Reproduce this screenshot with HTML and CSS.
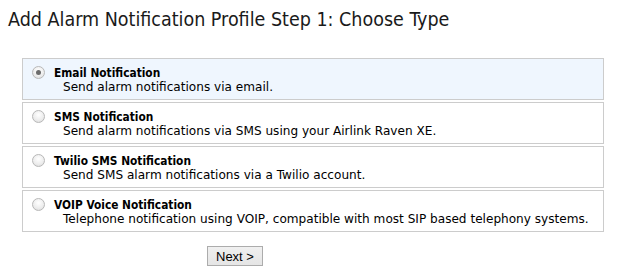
FILE: index.html
```html
<!DOCTYPE html>
<html>
<head>
<meta charset="utf-8">
<link rel="stylesheet" href="styles.css">
</head>
<body>
<h1 class="title">Add Alarm Notification Profile Step 1: Choose Type</h1>
<form class="types">
  <label class="option selected">
    <span class="radio checked"></span>
    <span class="text">
      <span class="name">Email Notification</span>
      <span class="desc">Send alarm notifications via email.</span>
    </span>
  </label>
  <label class="option">
    <span class="radio"></span>
    <span class="text">
      <span class="name">SMS Notification</span>
      <span class="desc">Send alarm notifications via SMS using your Airlink Raven XE.</span>
    </span>
  </label>
  <label class="option">
    <span class="radio"></span>
    <span class="text">
      <span class="name">Twilio SMS Notification</span>
      <span class="desc">Send SMS alarm notifications via a Twilio account.</span>
    </span>
  </label>
  <label class="option">
    <span class="radio"></span>
    <span class="text">
      <span class="name">VOIP Voice Notification</span>
      <span class="desc">Telephone notification using VOIP, compatible with most SIP based telephony systems.</span>
    </span>
  </label>
  <div class="actions">
    <button type="button" class="next">Next &gt;</button>
  </div>
</form>
</body>
</html>
```
FILE: styles.css
```css
html, body {
  margin: 0;
  padding: 0;
  background: #fff;
}
body {
  padding: 8px;
  font-family: "DejaVu Sans Condensed", "DejaVu Sans", sans-serif;
  color: #000;
}
.title {
  margin: 0;
  font-weight: normal;
  font-size: 19.5px;
  line-height: 24px;
  color: #1a1a1a;
}
.types {
  margin: 26px 0 0 14px;
  width: 582px;
  display: flex;
  flex-direction: column;
  gap: 2px;
}
.option {
  display: flex;
  align-items: flex-start;
  border: 1px solid #cccccc;
  background: #fff;
  padding: 7px 8px 4px 9px;
  height: 42px;
  box-sizing: border-box;
}
.option.selected {
  background: #eff6fe;
}
.radio {
  width: 11px;
  height: 11px;
  border-radius: 50%;
  border: 1px solid #b8b8b8;
  background: radial-gradient(circle at 50% 35%, #ffffff 0%, #ececec 60%, #d6d6d6 100%);
  margin: 0 9px 0 0;
  flex: none;
  position: relative;
}
.radio.checked::after {
  content: "";
  position: absolute;
  left: 3px;
  top: 3px;
  width: 5px;
  height: 5px;
  border-radius: 50%;
  background: #6b6b6b;
}
.text {
  display: flex;
  flex-direction: column;
}
.name {
  font-weight: bold;
  font-size: 11.8px;
  line-height: 14px;
}
.desc {
  font-family: "DejaVu Sans", sans-serif;
  font-size: 12.1px;
  line-height: 14px;
  padding-left: 9px;
}
.actions {
  display: flex;
  justify-content: flex-start;
  padding: 12px 0 0 185px;
}
.next {
  font-family: "Liberation Sans", Arial, sans-serif;
  font-size: 13px;
  height: 20px;
  padding: 0 8px;
  border: 1px solid #acacac;
  border-radius: 0;
  background: linear-gradient(#f0f0f0, #e5e5e5);
  color: #000;
}
```
